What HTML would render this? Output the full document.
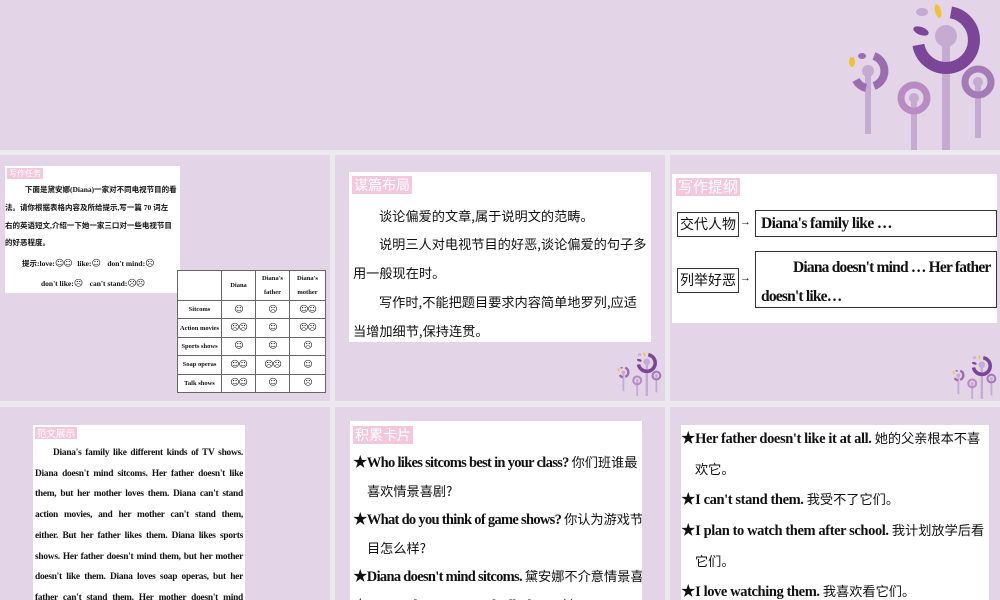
<!DOCTYPE html>
<html><head><meta charset="utf-8"><style>
*{margin:0;padding:0;box-sizing:border-box}
body{width:1000px;height:600px;overflow:hidden;background:#ebe9ed;position:relative;font-family:"Liberation Serif","Noto Sans CJK SC",serif;color:#111}
.bg{position:absolute;background:#e4d4e8}
.w{position:absolute;background:#fff;overflow:hidden}
.tag{display:inline-block;background:#f4c8dc;color:#fff;font-family:"Noto Sans CJK SC",sans-serif;font-weight:400}
.p{position:absolute;white-space:nowrap}
table{border-collapse:collapse;position:absolute;left:177px;top:270px;width:149px;height:123px;background:#fff;font-size:6.5px;font-weight:bold;text-align:center}
td{border:1px solid #666;padding:0}
.s{font-size:9px;font-weight:normal;font-family:"DejaVu Sans",sans-serif;letter-spacing:-1px}
.c{font-weight:normal;font-family:"Noto Sans CJK SC",sans-serif;font-size:13.2px;letter-spacing:0;line-height:1}
.l{white-space:nowrap;overflow:visible}
.p5 .l{height:28.6px}
.p6 .l{height:30.7px}
.j div{text-align:justify;text-align-last:justify;white-space:nowrap}
</style></head><body>
<div class="bg" style="left:0;top:0;width:1000px;height:150px"></div>
<div class="bg" style="left:0;top:155px;width:330px;height:246px"></div>
<div class="bg" style="left:335px;top:155px;width:330px;height:246px"></div>
<div class="bg" style="left:670px;top:155px;width:330px;height:246px"></div>
<div class="bg" style="left:0;top:407px;width:330px;height:193px"></div>
<div class="bg" style="left:335px;top:407px;width:330px;height:193px"></div>
<div class="bg" style="left:670px;top:407px;width:330px;height:193px"></div>

<svg width="1000" height="600" style="position:absolute;left:0;top:0">
<defs><g id="d">
<rect x="942" y="36" width="8" height="114" fill="#c5abd2"/>
<path d="M950.9 12.4 A28 28 0 1 1 918.4 44.9" fill="none" stroke="#7b4697" stroke-width="12"/>
<ellipse cx="921" cy="31" rx="8" ry="4" fill="#7b4697" transform="rotate(20 921 31)"/>
<ellipse cx="922" cy="12" rx="6" ry="4" fill="#c5abd2"/>
<ellipse cx="938" cy="11" rx="3" ry="7" fill="#f1c232" transform="rotate(-15 938 11)"/>
<circle cx="946" cy="36" r="11" fill="#c5abd2"/>
<rect x="865" y="70" width="6" height="64" fill="#c5abd2"/>
<path d="M874 56 A16 16 0 0 1 874 86" fill="none" stroke="#9a6cb0" stroke-width="8"/>
<path d="M856 80 A16 16 0 0 0 866 88" fill="none" stroke="#9a6cb0" stroke-width="8"/>
<ellipse cx="862" cy="56" rx="4" ry="3" fill="#9a6cb0"/>
<ellipse cx="852" cy="62" rx="3" ry="5" fill="#f1c232"/>
<circle cx="868" cy="71" r="6" fill="#c5abd2"/>
<rect x="911" y="98" width="6" height="52" fill="#c5abd2"/>
<circle cx="914" cy="98" r="13" fill="none" stroke="#b88cc2" stroke-width="7"/>
<circle cx="914" cy="98" r="5" fill="#c5abd2"/>
<rect x="975" y="82" width="6" height="56" fill="#c5abd2"/>
<circle cx="978" cy="82" r="13" fill="none" stroke="#a47bb7" stroke-width="7"/>
<circle cx="978" cy="82" r="5" fill="#c5abd2"/>
</g></defs>
<use href="#d"/>
<use href="#d" transform="translate(363 351) scale(0.3)"/>
<use href="#d" transform="translate(698 354) scale(0.3)"/>
</svg>

<!-- panel 1 -->
<div class="w" style="left:5px;top:166px;width:175px;height:127px;font-size:7.5px;font-weight:bold">
<span class="tag" style="position:absolute;left:2px;top:2px;font-size:8px;padding:0 2px">写作任务</span>
<div class="p" style="left:20px;top:18px">下面是黛安娜(Diana)一家对不同电视节目的看</div>
<div class="p" style="left:0;top:36px">法。请你根据表格内容及所给提示,写一篇 70 词左</div>
<div class="p" style="left:0;top:54px">右的英语短文,介绍一下她一家三口对一些电视节目</div>
<div class="p" style="left:0;top:71px">的好恶程度。</div>
<div class="p" style="left:17px;top:92px">提示:love:<span class="s">☺☺</span> &nbsp; like:<span class="s">☺</span> &nbsp;&nbsp; don't mind:<span class="s">☹</span></div>
<div class="p" style="left:36px;top:113px">don't like:<span class="s">☹</span> &nbsp;&nbsp; can't stand:<span class="s">☹☹</span></div>
</div>
<table>
<tr style="height:30px"><td style="width:44px"></td><td style="width:34px">Diana</td><td style="width:34px">Diana's<br><br>father</td><td>Diana's<br><br>mother</td></tr>
<tr><td>Sitcoms</td><td class="s">☺</td><td class="s">☹</td><td class="s">☺☺</td></tr>
<tr><td>Action movies</td><td class="s">☹☹</td><td class="s">☺</td><td class="s">☹☹</td></tr>
<tr><td>Sports shows</td><td class="s">☺</td><td class="s">☺</td><td class="s">☹</td></tr>
<tr><td>Soap operas</td><td class="s">☺☺</td><td class="s">☹☹</td><td class="s">☺</td></tr>
<tr><td>Talk shows</td><td class="s">☺☺</td><td class="s">☺</td><td class="s">☹</td></tr>
</table>

<!-- panel 2 -->
<div class="w" style="left:349px;top:172px;width:302px;height:170px;font-family:'Noto Sans CJK SC',sans-serif;font-size:13.2px">
<span class="tag" style="position:absolute;left:3px;top:4px;font-size:14px;line-height:18px;padding:0 2px">谋篇布局</span>
<div class="p" style="left:30px;top:34px">谈论偏爱的文章,属于说明文的范畴。</div>
<div class="p" style="left:30px;top:62px">说明三人对电视节目的好恶,谈论偏爱的句子多</div>
<div class="p" style="left:4px;top:91px">用一般现在时。</div>
<div class="p" style="left:30px;top:120px">写作时,不能把题目要求内容简单地罗列,应适</div>
<div class="p" style="left:4px;top:149px">当增加细节,保持连贯。</div>
</div>

<!-- panel 3 -->
<div class="w" style="left:672px;top:174px;width:325px;height:149px">
<span class="tag" style="position:absolute;left:4px;top:4px;font-size:15px;line-height:18px;padding:0 2px">写作提纲</span>
<div style="position:absolute;left:5px;top:38px;width:62px;height:25px;border:1px solid #333;font-family:'Noto Sans CJK SC',sans-serif;font-size:14px;line-height:23px;text-align:center">交代人物</div>
<div class="p" style="left:68px;top:42px;font-size:11px">→</div>
<div style="position:absolute;left:83px;top:36px;width:242px;height:27px;border:1px solid #333;font-size:15.5px;font-weight:bold;line-height:25px;padding-left:5px;letter-spacing:-0.6px;white-space:nowrap">Diana's family like …</div>
<div style="position:absolute;left:5px;top:94px;width:62px;height:25px;border:1px solid #333;font-family:'Noto Sans CJK SC',sans-serif;font-size:14px;line-height:23px;text-align:center">列举好恶</div>
<div class="p" style="left:68px;top:98px;font-size:11px">→</div>
<div style="position:absolute;left:83px;top:77px;width:242px;height:57px;border:1px solid #333;font-size:15.5px;font-weight:bold;line-height:29px;padding-left:5px;letter-spacing:-0.8px;white-space:nowrap">
<div style="padding-left:32px;padding-top:1px">Diana doesn't mind … Her father</div><div>doesn't like…</div></div>
</div>

<!-- panel 4 -->
<div class="w" style="left:33px;top:425px;width:212px;height:175px;font-size:9.4px;font-weight:bold;line-height:20.7px;letter-spacing:-0.25px">
<span class="tag" style="position:absolute;left:2px;top:2px;font-size:9.5px;line-height:12px;padding:0 2px;letter-spacing:0">范文展示</span>
<div class="j" style="position:absolute;left:2px;top:18px;width:208px">
<div style="padding-left:18px">Diana's family like different kinds of TV shows.</div>
<div>Diana doesn't mind sitcoms. Her father doesn't like</div>
<div>them, but her mother loves them. Diana can't stand</div>
<div>action movies, and her mother can't stand them,</div>
<div>either. But her father likes them. Diana likes sports</div>
<div>shows. Her father doesn't mind them, but her mother</div>
<div>doesn't like them. Diana loves soap operas, but her</div>
<div>father can't stand them. Her mother doesn't mind</div>
</div>
</div>

<!-- panel 5 -->
<div class="w p5" style="left:350px;top:421px;width:292px;height:179px;font-size:14.5px;font-weight:bold;line-height:28.6px;letter-spacing:-0.7px">
<span class="tag" style="position:absolute;left:3px;top:5px;font-size:14px;line-height:18px;padding:0 2px;letter-spacing:0">积累卡片</span>
<div style="position:absolute;left:3px;top:28px;width:290px">
<div class="l">★Who likes sitcoms best in your class? <span class="c">你们班谁最</span></div>
<div class="l" style="padding-left:14px"><span class="c">喜欢情景喜剧?</span></div>
<div class="l">★What do you think of game shows? <span class="c">你认为游戏节</span></div>
<div class="l" style="padding-left:14px"><span class="c">目怎么样?</span></div>
<div class="l">★Diana doesn't mind sitcoms. <span class="c">黛安娜不介意情景喜剧。</span></div>
<div class="l">★Her mother can't stand talk shows. <span class="c">她</span></div>
</div>
</div>

<!-- panel 6 -->
<div class="w p6" style="left:681px;top:425px;width:308px;height:175px;font-size:14.5px;font-weight:bold;line-height:30.7px;letter-spacing:-0.4px">
<div style="position:absolute;left:0;top:-1px;width:308px">
<div class="l">★Her father doesn't like it at all. <span class="c">她的父亲根本不喜</span></div>
<div class="l" style="padding-left:14px"><span class="c">欢它。</span></div>
<div class="l">★I can't stand them. <span class="c">我受不了它们。</span></div>
<div class="l">★I plan to watch them after school. <span class="c">我计划放学后看</span></div>
<div class="l" style="padding-left:14px"><span class="c">它们。</span></div>
<div class="l">★I love watching them. <span class="c">我喜欢看它们。</span></div>
</div>
</div>
</body></html>
